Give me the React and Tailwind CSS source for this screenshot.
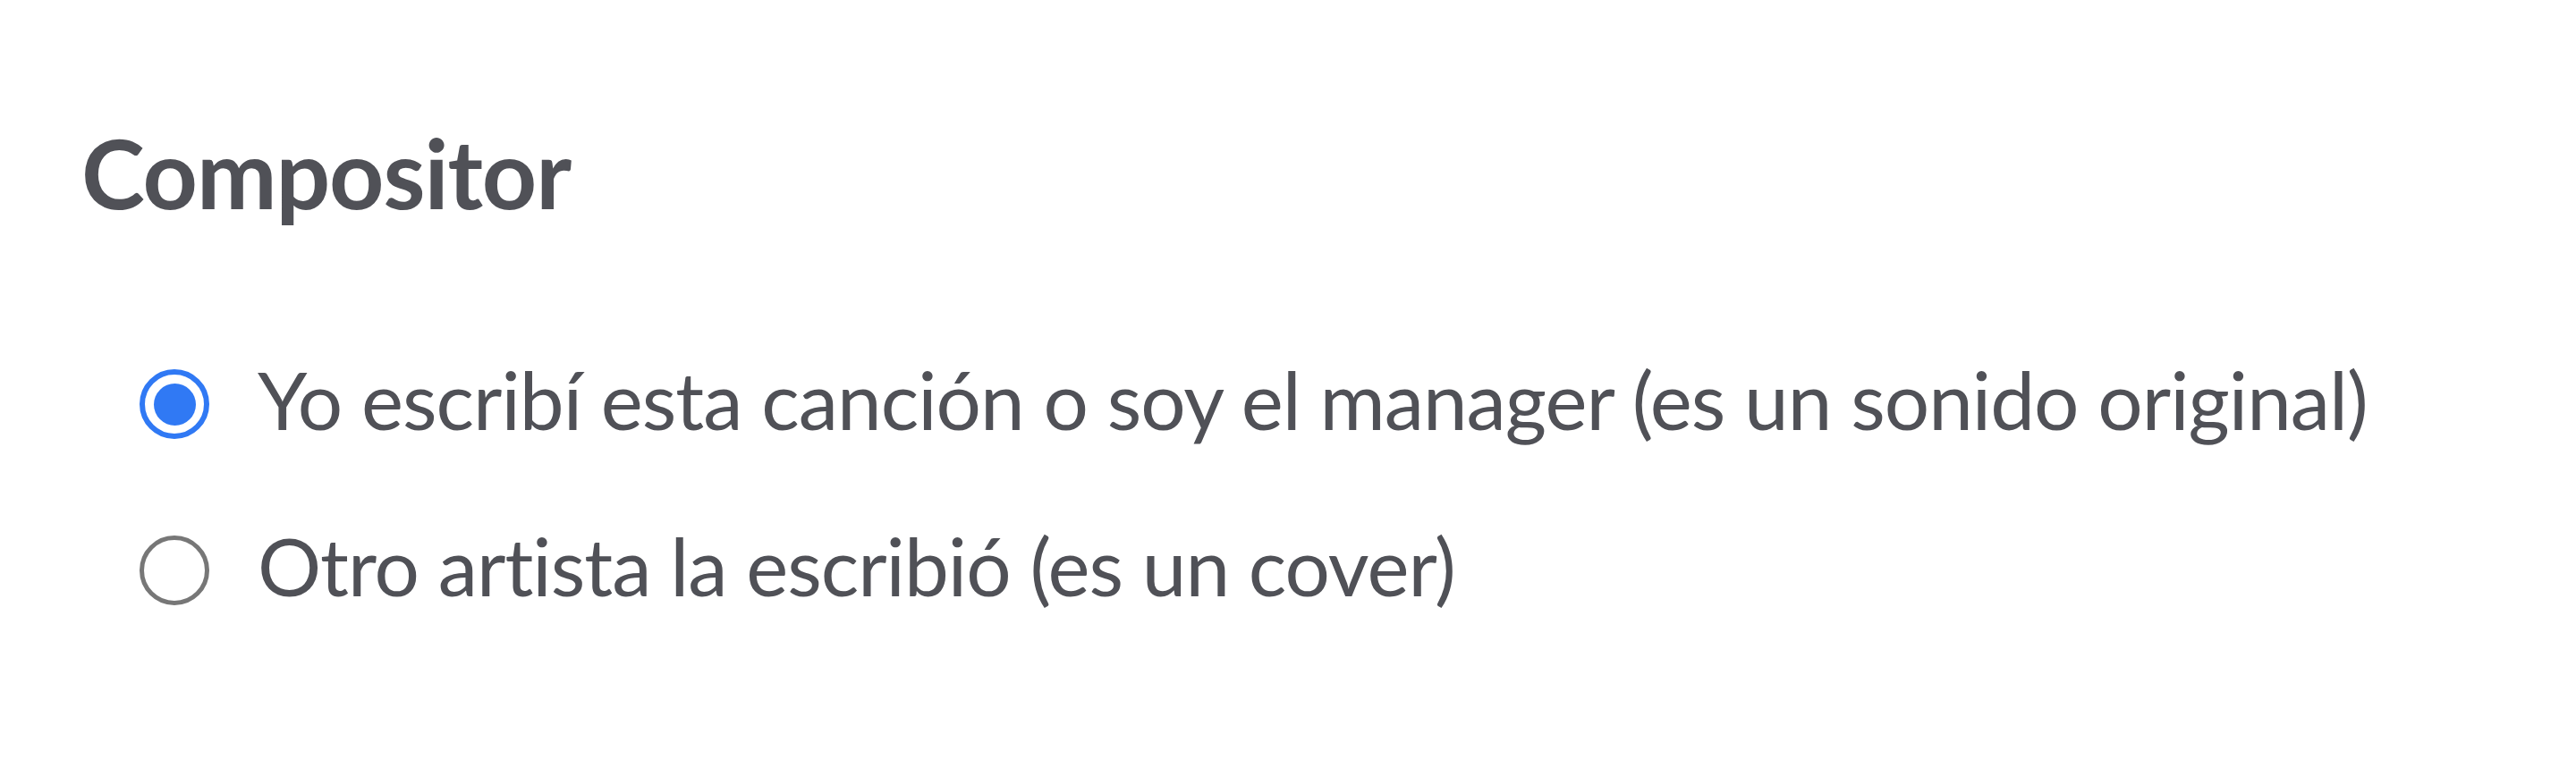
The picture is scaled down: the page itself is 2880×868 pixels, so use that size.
import { useState } from 'react'

const options = [
  { id: 'original', label: 'Yo escribí esta canción o soy el manager (es un sonido original)' },
  { id: 'cover', label: 'Otro artista la escribió (es un cover)' },
]

function Radio({ checked }) {
  if (checked) {
    return (
      <span className="mt-[19px] flex h-[78px] w-[78px] shrink-0 items-center justify-center rounded-full border-[6px] border-[#3079f4]">
        <span className="h-[47px] w-[47px] rounded-full bg-[#3079f4]" />
      </span>
    )
  }
  return <span className="mt-[19px] block h-[78px] w-[78px] shrink-0 rounded-full border-[5px] border-[#777777]" />
}

export default function App() {
  const [value, setValue] = useState('original')

  return (
    <div className="min-h-[868px] bg-white pl-[91px] pt-[129px] font-['Lato','Noto_Sans',sans-serif] text-[#505157] [font-variant-ligatures:none]">
      <h2 className="text-[107px] font-bold leading-[1.2] tracking-[-1.1px]">Compositor</h2>
      <div className="mt-[137px] flex flex-col gap-[79px] pl-[65px]">
        {options.map((opt) => (
          <label
            key={opt.id}
            className="flex cursor-pointer items-start gap-[54px]"
            onClick={() => setValue(opt.id)}
          >
            <Radio checked={value === opt.id} />
            <span className="text-[89px] leading-[1.2] tracking-[-1px]">{opt.label}</span>
          </label>
        ))}
      </div>
    </div>
  )
}
